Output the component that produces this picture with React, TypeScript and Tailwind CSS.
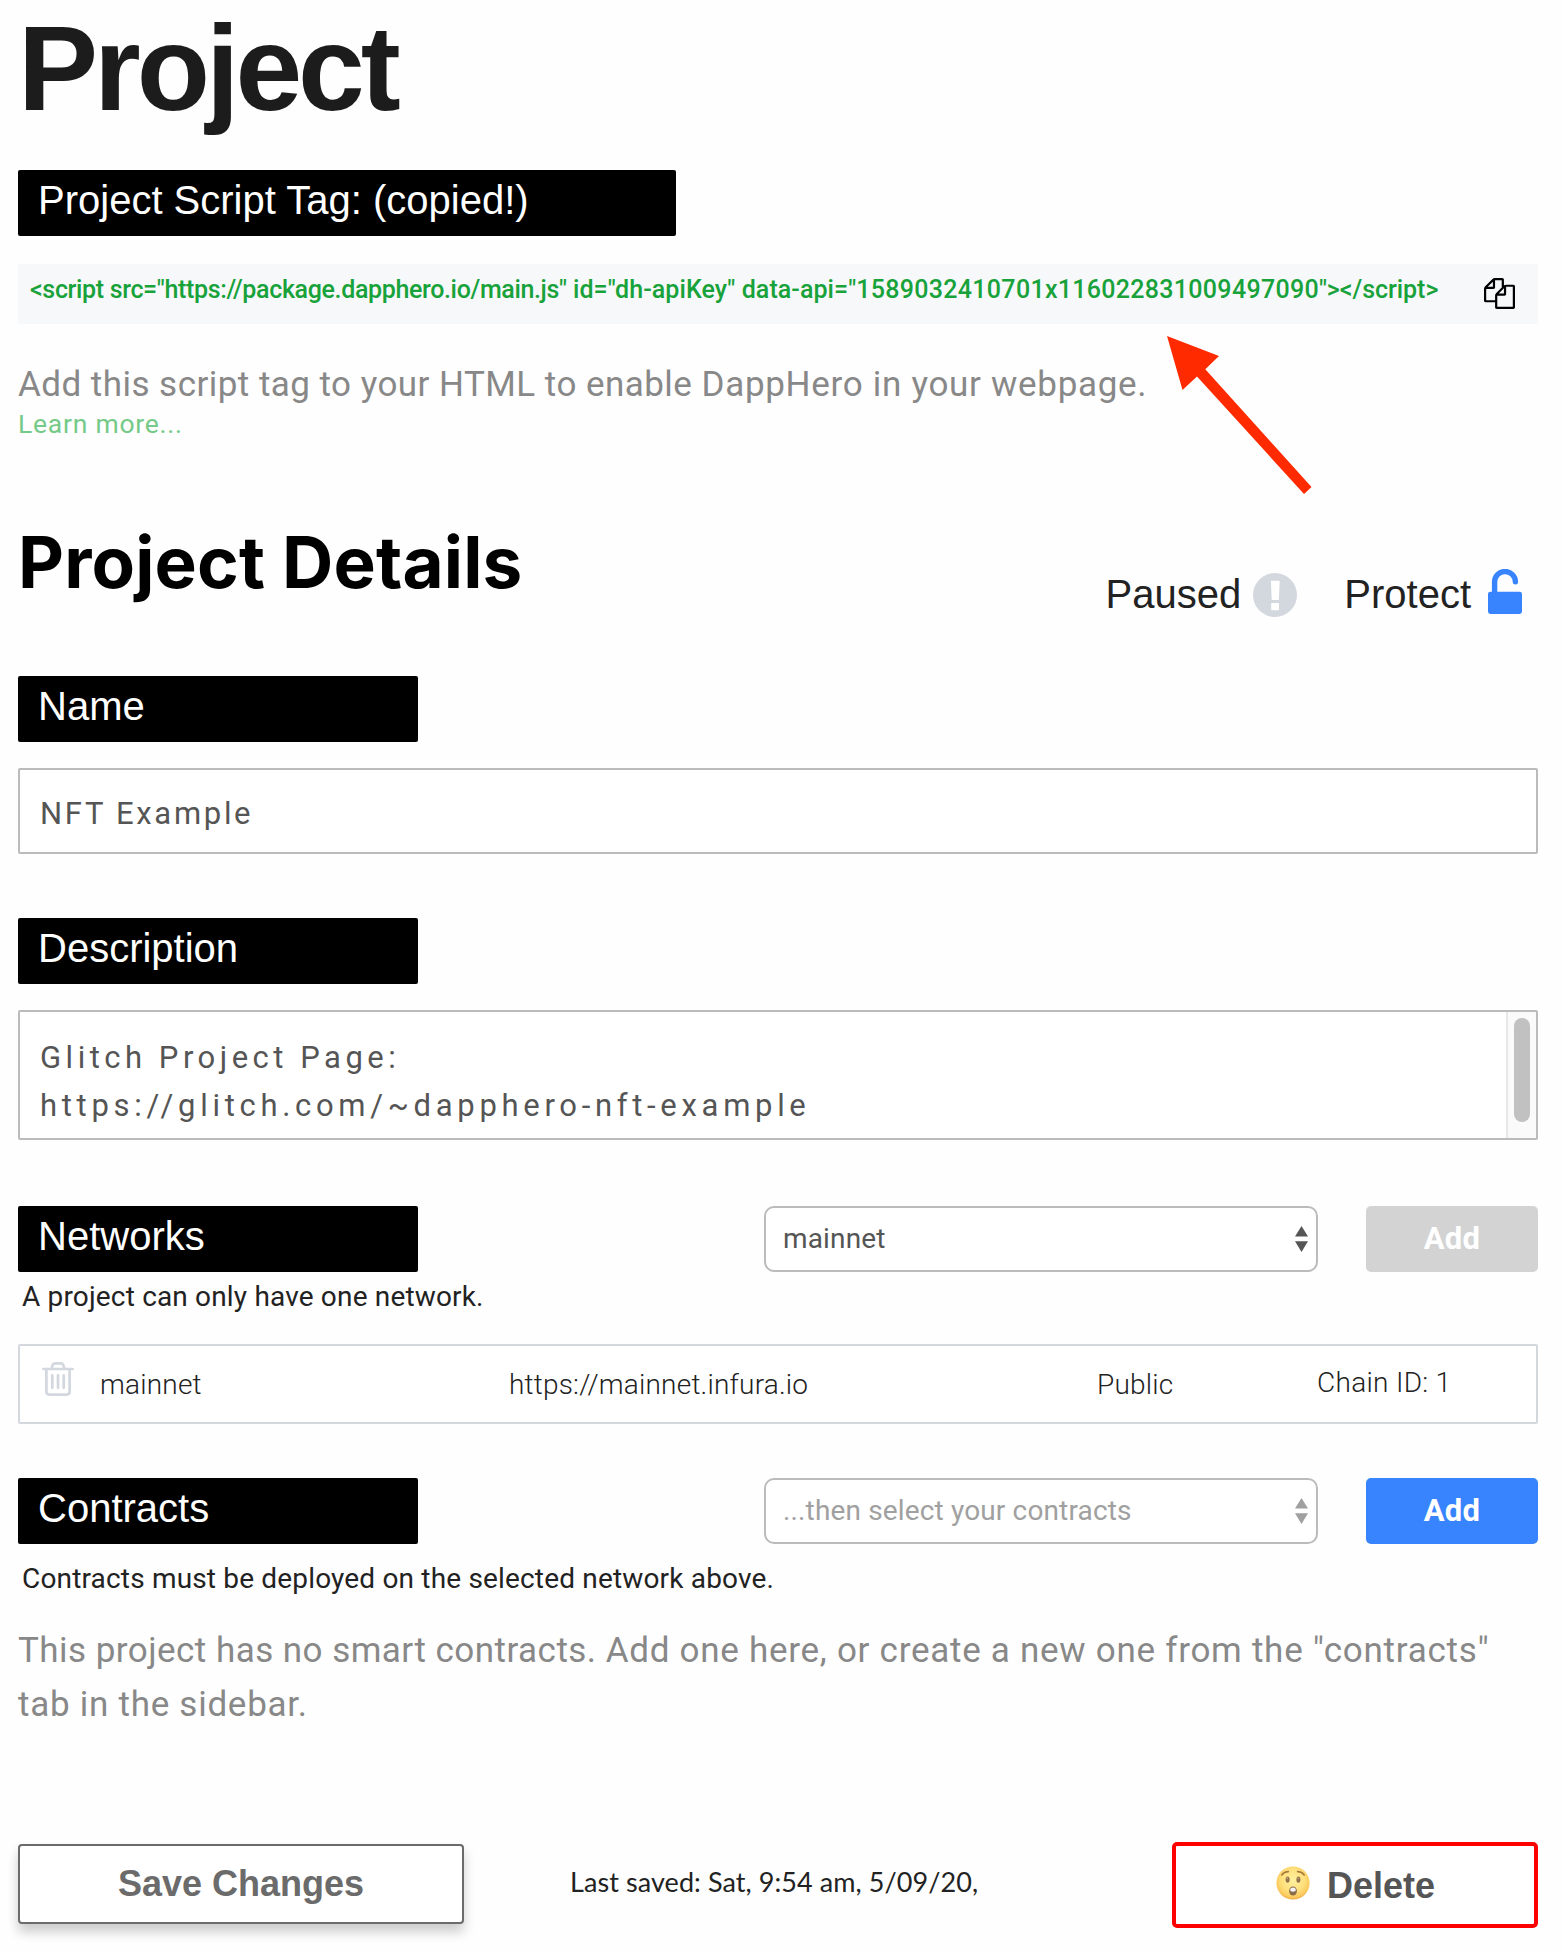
import type { ReactNode } from "react";

function Label({ children, wide = false }: { children: ReactNode; wide?: boolean }) {
  return (
    <div
      className={`h-[66px] shrink-0 rounded-[2px] bg-black pl-5 font-['Liberation_Sans',sans-serif] text-[40px] leading-[60px] whitespace-nowrap text-white ${wide ? "w-[658px]" : "w-[400px]"}`}
    >
      {children}
    </div>
  );
}

function CopyIcon() {
  return (
    <svg viewBox="0 0 1792 1792" className="size-[31px]" fill="#000">
      <path d="M1696 384q40 0 68 28t28 68v1216q0 40-28 68t-68 28h-960q-40 0-68-28t-28-68v-288h-544q-40 0-68-28t-28-68v-672q0-40 20-88t48-76l408-408q28-28 76-48t88-20h416q40 0 68 28t28 68v328q68-40 128-40h416zm-544 213l-299 299h299v-299zm-640-384l-299 299h299v-299zm196 647l316-316v-416h-384v416q0 40-28 68t-68 28h-416v640h512v-256q0-40 20-88t48-76zm956 804v-1152h-384v416q0 40-28 68t-68 28h-416v640h896z" />
    </svg>
  );
}

function PausedIcon() {
  return (
    <svg viewBox="0 0 44 44" className="size-11">
      <circle cx="22" cy="22" r="22" fill="#d3d8df" />
      <path d="M18.4 7.8h7.8q.5 0 .5.5l-.8 18q0 .6-.6.6h-6q-.6 0-.6-.6l-.8-18q0-.5.5-.5zM18.8 30h6.6q.6 0 .6.6v6q0 .6-.6.6h-6.6q-.6 0-.6-.6v-6q0-.6.6-.6z" fill="#fff" />
    </svg>
  );
}

function UnlockIcon() {
  return (
    <svg viewBox="0 0 34 45" className="h-[45px] w-[34px]">
      <rect y="22.7" width="34" height="22.3" rx="2.4" fill="#3884ff" />
      <path d="M6.6 25V13.1a10.4 10.4 0 0 1 20.8-.4" fill="none" stroke="#3884ff" strokeWidth="5.4" strokeLinecap="round" />
    </svg>
  );
}

function TrashIcon() {
  return (
    <svg viewBox="0 0 32 34" className="h-[34px] w-8" fill="none" stroke="#d3d8df" strokeWidth="2.7" strokeLinecap="round" strokeLinejoin="round">
      <path d="M1.4 7h29.2M9.6 6.6l1-3.4q.6-1.8 2.4-1.8h6q1.8 0 2.4 1.8l1 3.4M4.4 7.2v22.4q0 3 3 3h17.2q3 0 3-3V7.2" />
      <path d="M10.3 13.4v12.4M16 13.4v12.4M21.7 13.4v12.4" />
    </svg>
  );
}

function AstonishedFace() {
  return (
    <svg viewBox="0 0 34 34" className="size-[34px]">
      <defs>
        <radialGradient id="face" cx="50%" cy="42%" r="58%">
          <stop offset="0" stopColor="#fff0a0" />
          <stop offset="0.6" stopColor="#fee07c" />
          <stop offset="0.88" stopColor="#fbc95c" />
          <stop offset="1" stopColor="#eda942" />
        </radialGradient>
      </defs>
      <circle cx="17" cy="17" r="16.6" fill="url(#face)" />
      <path d="M5.8 9q2.4-3.4 6.6-3.4M28.2 9q-2.4-3.4-6.6-3.4" fill="none" stroke="#a67a3c" strokeWidth="1.6" strokeLinecap="round" />
      <ellipse cx="11.6" cy="13.6" rx="2" ry="3.2" fill="#93714a" />
      <ellipse cx="22.4" cy="13.6" rx="2" ry="3.2" fill="#93714a" />
      <circle cx="11.2" cy="12.3" r=".7" fill="#d9bf8d" />
      <circle cx="22" cy="12.3" r=".7" fill="#d9bf8d" />
      <ellipse cx="17" cy="25" rx="3.9" ry="4.5" fill="#8a6b4a" />
      <path d="M14.2 23.6q.2-2 2.8-2t2.8 2q.1 2.2-2.8 2.2t-2.8-2.2z" fill="#f4f4f4" />
    </svg>
  );
}

function Select({ value, placeholder = false }: { value: string; placeholder?: boolean }) {
  return (
    <div
      className={`flex h-[66px] w-[554px] items-center justify-between rounded-[10px] border-2 border-[#bbb] bg-white pr-2 pl-[17px] text-[28px] tracking-[0.15px] ${placeholder ? "text-[#a0a0a0]" : "text-[#555]"}`}
    >
      <span>{value}</span>
      <svg viewBox="0 0 13 26" className="h-[26px] w-[13px]" fill="currentColor">
        <path d="M0 10.5 6.5 0 13 10.5zM0 15.3h13L6.5 26z" />
      </svg>
    </div>
  );
}

function AddButton({ disabled = false }: { disabled?: boolean }) {
  return (
    <button className={`h-[66px] w-[172px] rounded-[5px] pt-px text-[31px] font-bold tracking-[0.3px] text-white ${disabled ? "bg-[#d3d3d3]" : "bg-[#3884ff]"}`}>
      Add
    </button>
  );
}

export default function App() {
  return (
    <main className="h-[1952px] w-[1562px] overflow-hidden bg-[#fefefe] pr-6 pl-[18px] font-['Roboto',sans-serif] text-[#222]">
      <h1 className="h-[170px] font-['Liberation_Sans',sans-serif] text-[120px] leading-[136px] font-bold tracking-[-4px] text-[#1c1c1c]">
        Project
      </h1>

      <Label wide>Project Script Tag: (copied!)</Label>

      <section className="relative mt-7">
        <div className="flex h-[60px] justify-between bg-[#f7f8fa] pr-[23px] pl-3">
          <code className="font-['Roboto',sans-serif] text-[25px] leading-[52px] font-medium whitespace-nowrap text-[#18a23a]">
            <span className="tracking-[-0.35px]">{'<script src="https://package.dapphero.io/main.js"'}</span>
            <span className="tracking-[0.08px]">{' id="dh-apiKey" data-api="'}</span>
            <span className="tracking-[0.3px]">1589032410701x116022831009497090</span>
            <span className="tracking-[-0.05px]">{'"></script>'}</span>
          </code>
          <div className="pt-3.5">
            <CopyIcon />
          </div>
        </div>
        <svg viewBox="0 0 146 160" className="absolute top-[72px] left-[1149px] h-40 w-[146px]" fill="#ff2a00">
          <path d="M0 0 52 20 38.3 33.3 144.5 151 137 158 30 40.5 15.5 54z" />
        </svg>
      </section>

      <p className="mt-[34px] text-[35px] leading-[54px] tracking-[0.7px] text-[#888]">
        <span className="tracking-[0.46px]">Add this script tag to your HTML to enable </span>
        DappHero in your webpage.
      </p>
      <a className="-mt-0.5 block text-[26.5px] leading-7 tracking-[0.75px] text-[#75ca88]">Learn more...</a>

      <header className="mt-[82px] flex h-[156px] justify-between">
        <h2 className="font-['Inter',sans-serif] text-[71px] leading-[84px] font-bold tracking-[0.15px] text-black">Project Details</h2>
        <div className="box-content flex h-[50px] items-center pt-[49px] pr-4 font-['Liberation_Sans',sans-serif] text-[40px] leading-[50px]">
          <span>Paused</span>
          <span className="mt-0.5 mr-[47px] ml-3">
            <PausedIcon />
          </span>
          <span>Protect</span>
          <span className="-mt-1.5 ml-[17px]">
            <UnlockIcon />
          </span>
        </div>
      </header>

      <Label>Name</Label>
      <div className="mt-[26px] h-[86px] rounded-[2px] border-2 border-[#bbb] bg-white pl-5 text-[31px] leading-[87px] tracking-[2.7px] text-[#555]">
        NFT Example
      </div>

      <div className="mt-16">
        <Label>Description</Label>
      </div>
      <div className="mt-[26px] flex h-[130px] justify-between rounded-[2px] border-2 border-[#bbb] bg-white">
        <p className="pt-[22px] pl-5 text-[31px] leading-[48px] tracking-[4.7px] text-[#555]">
          <span className="tracking-[4.5px]">Glitch Project Page:</span>
          <br />
          https://glitch.com/~dapphero-nft-example
        </p>
        <div className="w-[30px] border-l-2 border-[#e8e8e8] bg-[#fafafa] pt-1.5 pl-[6px]">
          <div className="h-[104px] w-4 rounded-full bg-[#c1c1c1]" />
        </div>
      </div>

      <div className="mt-[66px] flex">
        <Label>Networks</Label>
        <div className="ml-auto flex gap-12">
          <Select value="mainnet" />
          <AddButton disabled />
        </div>
      </div>
      <p className="mt-2.5 pl-1 text-[28px] leading-[29px] tracking-[0.17px]">A project can only have one network.</p>

      <div className="mt-[33px] flex h-20 rounded-[2px] border-2 border-[#d3d8df] bg-white pl-[22px] text-[28px] leading-[78px] font-light tracking-[0.2px] whitespace-nowrap">
        <div className="w-[58px] pt-4">
          <TrashIcon />
        </div>
        <span className="w-[409px]">mainnet</span>
        <span className="w-[588px]">https://mainnet.infura.io</span>
        <span className="w-[220px]">Public</span>
        <span className="leading-[74px] tracking-[0.3px]">Chain ID: 1</span>
      </div>

      <div className="mt-[54px] flex">
        <Label>Contracts</Label>
        <div className="ml-auto flex gap-12">
          <Select value="...then select your contracts" placeholder />
          <AddButton />
        </div>
      </div>
      <p className="mt-5 pl-1 text-[28px] leading-[29px] tracking-[0.17px]">
        Contracts must be deployed on the selected network above.
      </p>
      <p className="mt-[31px] text-[35px] leading-[54px] tracking-[0.73px] text-[#888]">
        <span className="tracking-[0.46px]">This project has no smart contracts. </span>
        Add one here, or create a new one from the "contracts"
        <br />
        tab in the sidebar.
      </p>

      <footer className="mt-[110px] flex h-[86px] items-center">
        <button className="mb-0.5 h-20 w-[446px] rounded-[4px] border-2 border-[#6b6b6b] bg-white font-['Liberation_Sans',sans-serif] text-[36px] font-bold text-[#6b6b6b] shadow-[0_8px_12px_rgba(0,0,0,0.2)]">
          Save Changes
        </button>
        <p className="ml-[106px] pb-1.5 font-['Lato',sans-serif] text-[27px] tracking-[0.08px]">
          Last saved: Sat, 9:54 am, 5/09/20,
        </p>
        <button className="ml-auto flex h-[86px] w-[366px] items-center rounded-[5px] border-4 border-[#f00] bg-white pl-[100px] font-['Liberation_Sans',sans-serif] text-[36px] font-bold text-[#555]">
          <span className="-mt-1">
            <AstonishedFace />
          </span>
          <span className="mt-0.5 ml-[17px]">Delete</span>
        </button>
      </footer>
    </main>
  );
}
